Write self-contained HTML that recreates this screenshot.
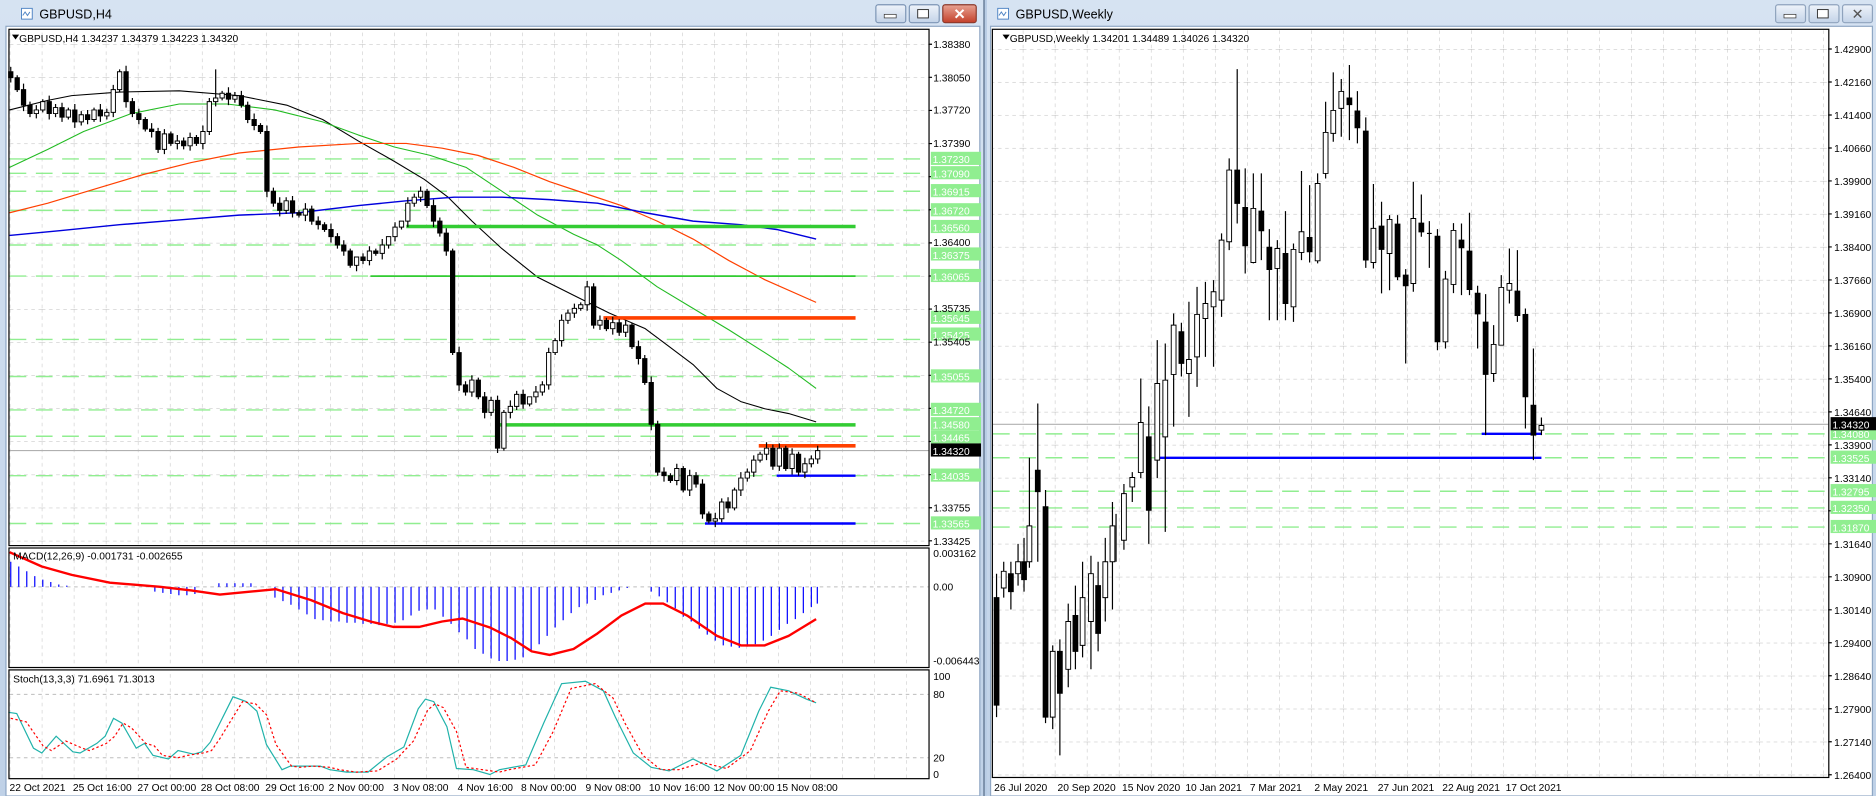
<!DOCTYPE html>
<html><head><meta charset="utf-8"><style>
html,body{margin:0;padding:0;background:#b9cde5;overflow:hidden}
svg{display:block}
text{font-family:"Liberation Sans",sans-serif;}
</style></head><body>
<svg width="1876" height="796" viewBox="0 0 1570 666" preserveAspectRatio="none" xmlns="http://www.w3.org/2000/svg">
<defs>
<linearGradient id="tb" x1="0" y1="0" x2="0" y2="1"><stop offset="0" stop-color="#d6e3f2"/><stop offset="1" stop-color="#bfd1e7"/></linearGradient>
<linearGradient id="btn" x1="0" y1="0" x2="0" y2="1"><stop offset="0" stop-color="#eef3fa"/><stop offset="1" stop-color="#c3d3e8"/></linearGradient>
<linearGradient id="cls" x1="0" y1="0" x2="0" y2="1"><stop offset="0" stop-color="#e8a393"/><stop offset="1" stop-color="#c4402a"/></linearGradient>
<pattern id="gL" patternUnits="userSpaceOnUse" x="8.2" y="37" width="26.8" height="27.7"><line x1="0" y1="0" x2="0" y2="27.7" stroke="#bdbdbd" stroke-width="0.8" stroke-dasharray="3,3"/><line x1="0" y1="0" x2="26.8" y2="0" stroke="#bdbdbd" stroke-width="0.8" stroke-dasharray="3,3"/></pattern>
<pattern id="vL" patternUnits="userSpaceOnUse" x="8.2" y="0" width="26.8" height="6"><line x1="0" y1="0" x2="0" y2="3" stroke="#bdbdbd" stroke-width="0.8"/></pattern>
<pattern id="gR" patternUnits="userSpaceOnUse" x="25.2" y="41" width="26.8" height="27.6"><line x1="0" y1="0" x2="0" y2="27.6" stroke="#bdbdbd" stroke-width="0.8" stroke-dasharray="3,3"/><line x1="0" y1="0" x2="26.8" y2="0" stroke="#bdbdbd" stroke-width="0.8" stroke-dasharray="3,3"/></pattern>
</defs>
<rect x="0" y="0" width="1570" height="666" fill="#b9cde5"/>
<!-- left window -->
<rect x="0" y="0" width="823" height="666" fill="url(#tb)"/>
<rect x="5" y="22" width="815" height="644" fill="#fff" stroke="#8fa7c4"/>
<rect x="18" y="7" width="9" height="9" fill="#fff" stroke="#4f84c4" stroke-width="0.8"/>
<path d="M19 13 l2 -3 2 3 2 -3" stroke="#4f84c4" fill="none" stroke-width="0.8"/>
<text x="33" y="15.5" font-size="10.5" fill="#000">GBPUSD,H4</text>
<rect x="733" y="4" width="25" height="15" rx="2" fill="url(#btn)" stroke="#7d95b5"/>
<rect x="740" y="12" width="10" height="3" fill="#fff" stroke="#333" stroke-width="0.6"/>
<rect x="761" y="4" width="25" height="15" rx="2" fill="url(#btn)" stroke="#7d95b5"/>
<rect x="768" y="8" width="9" height="7" fill="#fff" stroke="#333" stroke-width="0.8"/>
<rect x="789" y="4" width="28" height="15" rx="2" fill="url(#cls)" stroke="#8a3a2c"/>
<text x="803" y="16" font-size="12" font-weight="bold" fill="#fff" text-anchor="middle">✕</text>
<line x1="823.5" y1="0" x2="823.5" y2="666" stroke="#556a86"/>
<!-- right window -->
<rect x="826" y="0" width="744" height="666" fill="url(#tb)"/>
<rect x="829" y="22" width="738" height="644" fill="#fff" stroke="#8fa7c4"/>
<rect x="835" y="7" width="9" height="9" fill="#fff" stroke="#4f84c4" stroke-width="0.8"/>
<path d="M836 13 l2 -3 2 3 2 -3" stroke="#4f84c4" fill="none" stroke-width="0.8"/>
<text x="850" y="15.5" font-size="10.5" fill="#000">GBPUSD,Weekly</text>
<rect x="1486" y="4" width="25" height="15" rx="2" fill="url(#btn)" stroke="#8fa3bd"/>
<rect x="1493" y="12" width="10" height="3" fill="#fff" stroke="#333" stroke-width="0.6"/>
<rect x="1514" y="4" width="25" height="15" rx="2" fill="url(#btn)" stroke="#8fa3bd"/>
<rect x="1521" y="8" width="9" height="7" fill="#fff" stroke="#333" stroke-width="0.8"/>
<rect x="1542" y="4" width="25" height="15" rx="2" fill="url(#btn)" stroke="#8fa3bd"/>
<text x="1554.5" y="16" font-size="12" fill="#555" text-anchor="middle">✕</text>

<!-- LEFT grids -->
<rect x="8" y="25" width="769" height="431" fill="url(#gL)"/>
<rect x="8" y="459" width="769" height="99" fill="url(#vL)"/>
<rect x="8" y="561" width="769" height="90" fill="url(#vL)"/>
<g stroke="#bdbdbd" stroke-width="0.8" stroke-dasharray="3,3">
<line x1="8" y1="491" x2="777" y2="491"/><line x1="8" y1="581" x2="777" y2="581"/><line x1="8" y1="634" x2="777" y2="634"/>
</g>
<g stroke="#90ee90" stroke-width="1.2" stroke-dasharray="14,8">
<line x1="8" y1="133" x2="777" y2="133"/><line x1="8" y1="145" x2="777" y2="145"/><line x1="8" y1="160" x2="777" y2="160"/><line x1="8" y1="176" x2="777" y2="176"/><line x1="8" y1="205" x2="777" y2="205"/><line x1="8" y1="231" x2="777" y2="231"/><line x1="8" y1="284" x2="777" y2="284"/><line x1="8" y1="315" x2="777" y2="315"/><line x1="8" y1="343" x2="777" y2="343"/><line x1="8" y1="365" x2="777" y2="365"/><line x1="8" y1="398" x2="777" y2="398"/><line x1="8" y1="438" x2="777" y2="438"/>
</g>
<line x1="8" y1="377" x2="777" y2="377" stroke="#b0b0b0"/>
<!-- MAs -->
<g fill="none" stroke-linejoin="round">
<polyline stroke="#000" stroke-width="0.9" points="8,92 40,84 60,80 100,77 150,76 200,80 240,88 270,100 300,118 330,135 355,150 375,165 395,185 420,208 450,232 480,247 510,262 540,275 560,290 580,305 600,325 620,336 640,342 660,346 683,353"/>
<polyline stroke="#22bb22" stroke-width="0.9" points="8,140 40,125 70,110 110,95 150,87 190,87 230,92 270,102 300,113 330,123 360,130 390,140 420,160 450,180 480,196 500,205 520,218 550,240 580,258 610,276 640,295 660,308 683,325"/>
<polyline stroke="#ff4000" stroke-width="1" points="8,178 40,170 80,158 120,146 160,136 200,128 250,123 300,120 340,120 370,124 400,130 430,140 460,152 490,162 520,172 550,185 580,200 610,218 640,234 683,253"/>
<polyline stroke="#0000dd" stroke-width="1.2" points="8,197 50,193 100,188 150,184 200,180 250,178 300,172 340,168 380,165 420,165 460,167 500,170 540,178 580,185 620,188 650,192 683,200"/>
</g>
<line x1="340" y1="189.5" x2="716" y2="189.5" stroke="#33cc33" stroke-width="3"/>
<line x1="310" y1="231" x2="716" y2="231" stroke="#33cc33" stroke-width="1.5"/>
<line x1="505" y1="266" x2="716" y2="266" stroke="#ff4000" stroke-width="3"/>
<line x1="415" y1="355.5" x2="716" y2="355.5" stroke="#33cc33" stroke-width="3"/>
<line x1="635" y1="373" x2="716" y2="373" stroke="#ff4000" stroke-width="3"/>
<line x1="650" y1="398" x2="716" y2="398" stroke="#0000ff" stroke-width="2"/>
<line x1="590" y1="438" x2="716" y2="438" stroke="#0000ff" stroke-width="2"/>
<!-- left candles: wicks -->
<path stroke="#000" stroke-width="1" fill="none" d="M9 56V69M14.4 63V77M19.7 70V93M25.1 85V98M30.4 88V99M35.8 83V94M41.2 80V100M46.5 87V98M51.9 86V102M57.2 90V100M62.6 87V107M68 93V105M73.3 92V104M78.7 90V102M84 87V102M89.4 91V100M94.8 71V98M100.1 58V77M105.5 55V90M110.8 82V98M116.2 91V104M121.6 98V110M126.9 103V115M132.3 107V128M137.6 108V129M143 110V122M148.4 113V125M153.7 115V125M159.1 111V126M164.4 113V122M169.8 105V125M175.2 82V113M180.5 58V89M185.9 76V84M191.2 73V88M196.6 77V86M202 76V90M207.3 85V103M212.7 95V109M218 103V112M223.4 105V165M228.8 157V173M234.1 165V181M239.5 165V179M244.8 164V182M250.2 176V182M255.6 170V185M260.9 172V188M266.3 181V192M271.6 186V194M277 187V203M282.4 195V208M287.7 201V214M293.1 208V224M298.4 217V227M303.8 212V221M309.2 206V222M314.5 208V214M319.9 200V217M325.2 202V208M330.6 186V202M336 188V192M341.3 165V190M346.7 162V173M352 156V169M357.4 158V174M362.8 167V190M368.1 182V198M373.5 191V214M378.8 208V297M384.2 290V327M389.6 319V331M394.9 314V332M400.3 316V334M405.6 328V350M411 332V348M416.4 331V379M421.7 343V377M427.1 335V350M432.4 327V343M437.8 326V342M443.2 336V340M448.5 323V337M453.9 319V331M459.2 291V326M464.6 283V297M470 263V290M475.3 259V271M480.7 254V266M486 253V260M491.4 235V260M496.8 237V275M502.1 264V276M507.5 266V277M512.8 265V280M518.2 267V281M523.6 268V282M528.9 270V292M534.3 285V305M539.6 297V322M545 315V360M550.4 352V398M555.7 391V403M561.1 396V404M566.4 388V406M571.8 390V412M577.2 393V415M582.5 395V408M587.9 401V434M593.2 428V438M598.6 429V441M604 417V437M609.3 416V429M614.7 408V427M620 395V415M625.4 392V403M630.8 381V399M636.1 378V387M641.5 370V385M646.8 372V393M652.2 371V394M657.6 373V394M662.9 375V397M668.3 378V398M673.6 383V400M679 381V391M684.3 373V388"/>
<path fill="#000" stroke="#000" stroke-width="0.8" d="M7.2 60h3.6v5h-3.6zM12.6 65h3.6v10h-3.6zM17.9 75h3.6v13h-3.6zM23.3 88h3.6v7h-3.6zM39.4 85h3.6v10h-3.6zM50.1 90h3.6v8h-3.6zM60.8 92h3.6v10h-3.6zM71.5 96h3.6v4h-3.6zM82.2 92h3.6v5h-3.6zM103.7 60h3.6v25h-3.6zM109 85h3.6v10h-3.6zM114.4 95h3.6v5h-3.6zM119.8 100h3.6v8h-3.6zM125.1 108h3.6v2h-3.6zM130.5 110h3.6v15h-3.6zM141.2 112h3.6v8h-3.6zM151.9 118h3.6v4h-3.6zM162.6 115h3.6v5h-3.6zM189.4 78h3.6v5h-3.6zM200.2 80h3.6v8h-3.6zM205.5 88h3.6v12h-3.6zM210.9 100h3.6v5h-3.6zM216.2 105h3.6v5h-3.6zM221.6 110h3.6v50h-3.6zM227 160h3.6v10h-3.6zM232.3 170h3.6v6h-3.6zM243 168h3.6v10h-3.6zM248.4 178h3.6v2h-3.6zM259.1 175h3.6v10h-3.6zM264.5 185h3.6v3h-3.6zM269.8 188h3.6v4h-3.6zM275.2 192h3.6v6h-3.6zM280.6 198h3.6v7h-3.6zM285.9 205h3.6v5h-3.6zM291.3 210h3.6v12h-3.6zM302 215h3.6v3h-3.6zM312.7 210h3.6v2h-3.6zM355.6 160h3.6v12h-3.6zM361 172h3.6v13h-3.6zM366.3 185h3.6v10h-3.6zM371.7 195h3.6v15h-3.6zM377 210h3.6v85h-3.6zM382.4 295h3.6v27h-3.6zM387.8 322h3.6v6h-3.6zM398.5 318h3.6v14h-3.6zM403.8 332h3.6v13h-3.6zM414.6 335h3.6v40h-3.6zM436 330h3.6v8h-3.6zM495 240h3.6v32h-3.6zM505.7 268h3.6v7h-3.6zM516.4 270h3.6v8h-3.6zM527.1 272h3.6v18h-3.6zM532.5 290h3.6v10h-3.6zM537.8 300h3.6v20h-3.6zM543.2 320h3.6v35h-3.6zM548.6 355h3.6v40h-3.6zM553.9 395h3.6v3h-3.6zM559.3 398h3.6v4h-3.6zM570 392h3.6v18h-3.6zM580.7 398h3.6v7h-3.6zM586.1 405h3.6v25h-3.6zM591.4 430h3.6v6h-3.6zM607.5 420h3.6v5h-3.6zM645 375h3.6v15h-3.6zM655.8 375h3.6v17h-3.6zM666.5 380h3.6v15h-3.6z"/>
<path fill="#fff" stroke="#000" stroke-width="0.8" d="M28.6 92h3.6v3h-3.6zM34 85h3.6v7h-3.6zM44.7 90h3.6v5h-3.6zM55.4 92h3.6v6h-3.6zM66.2 96h3.6v6h-3.6zM76.9 92h3.6v8h-3.6zM87.6 94h3.6v3h-3.6zM93 75h3.6v19h-3.6zM98.3 60h3.6v15h-3.6zM135.8 112h3.6v13h-3.6zM146.6 118h3.6v2h-3.6zM157.3 115h3.6v7h-3.6zM168 110h3.6v10h-3.6zM173.4 85h3.6v25h-3.6zM178.7 82h3.6v3h-3.6zM184.1 78h3.6v4h-3.6zM194.8 80h3.6v3h-3.6zM237.7 168h3.6v8h-3.6zM253.8 175h3.6v5h-3.6zM296.6 215h3.6v7h-3.6zM307.4 210h3.6v8h-3.6zM318.1 205h3.6v7h-3.6zM323.4 198h3.6v7h-3.6zM328.8 190h3.6v8h-3.6zM334.2 185h3.6v5h-3.6zM339.5 170h3.6v15h-3.6zM344.9 165h3.6v5h-3.6zM350.2 160h3.6v5h-3.6zM393.1 318h3.6v10h-3.6zM409.2 335h3.6v10h-3.6zM419.9 345h3.6v30h-3.6zM425.3 340h3.6v5h-3.6zM430.6 330h3.6v10h-3.6zM441.4 332h3.6v6h-3.6zM446.7 328h3.6v4h-3.6zM452.1 322h3.6v6h-3.6zM457.4 295h3.6v27h-3.6zM462.8 285h3.6v10h-3.6zM468.2 268h3.6v17h-3.6zM473.5 262h3.6v6h-3.6zM478.9 258h3.6v4h-3.6zM484.2 255h3.6v3h-3.6zM489.6 240h3.6v15h-3.6zM500.3 268h3.6v4h-3.6zM511 270h3.6v5h-3.6zM521.8 272h3.6v6h-3.6zM564.6 392h3.6v10h-3.6zM575.4 398h3.6v12h-3.6zM596.8 434h3.6v2h-3.6zM602.2 420h3.6v14h-3.6zM612.9 410h3.6v15h-3.6zM618.2 400h3.6v10h-3.6zM623.6 395h3.6v5h-3.6zM629 385h3.6v10h-3.6zM634.3 380h3.6v5h-3.6zM639.7 375h3.6v5h-3.6zM650.4 375h3.6v15h-3.6zM661.1 380h3.6v12h-3.6zM671.8 388h3.6v7h-3.6zM677.2 384h3.6v4h-3.6zM682.5 377h3.6v7h-3.6z"/>
<!-- MACD histogram -->
<path stroke="#0000ff" stroke-width="1" fill="none" d="M9 491V470M15.7 491V474M22.4 491V478M29.1 491V482M35.8 491V485M42.5 491V487M49.2 491V489M55.9 491V490M129.6 491V495M136.3 491V496M143 491V497M149.7 491V498M156.4 491V498M163.1 491V497M183.2 491V488M189.9 491V488M196.6 491V488M203.3 491V488M210 491V488M230.1 491V500M236.8 491V503M243.5 491V506M250.2 491V510M256.9 491V514M263.6 491V518M270.3 491V519M277 491V520M283.7 491V520M290.4 491V521M297.1 491V521M303.8 491V522M310.5 491V522M317.2 491V523M323.9 491V522M330.6 491V521M337.3 491V519M344 491V515M350.7 491V511M357.4 491V510M364.1 491V510M370.8 491V516M377.5 491V522M384.2 491V529M390.9 491V535M397.6 491V543M404.3 491V547M411 491V551M417.7 491V553M424.4 491V553M431.1 491V552M437.8 491V550M444.5 491V545M451.2 491V539M457.9 491V532M464.6 491V525M471.3 491V519M478 491V513M484.7 491V508M491.4 491V505M498.1 491V502M504.8 491V498M511.5 491V496M518.2 491V494M524.9 491V492M545 491V495M551.7 491V499M558.4 491V504M565.1 491V509M571.8 491V516M578.5 491V520M585.2 491V526M591.9 491V531M598.6 491V536M605.3 491V540M612 491V541M618.7 491V542M625.4 491V541M632.1 491V539M638.8 491V536M645.5 491V532M652.2 491V527M658.9 491V522M665.6 491V518M672.3 491V513M679 491V508M684 491V505"/>
<polyline fill="none" stroke="#ff0000" stroke-width="2" stroke-linejoin="round" points="8,462 35,474 60,481 92,487.5 134,491 160,494 184,497.5 210,495 231,493 260,502 287,513 310,520 329,524.5 351,524.5 370,520 387,517.5 410,525 428,534 445,545 460,548 480,543 500,530 520,515 540,505 555,505 575,515 600,532 620,540 640,540 660,532 683,518"/>
<!-- Stoch -->
<polyline fill="none" stroke="#20b2aa" stroke-width="1" points="7,596 14,597 28,626 35,630 47,616 61,629 67,630 81,622 88,616 95,601 102,605 114,626 121,622 128,632 141,635 149,628 162,631 169,629 176,621 195,583 206,587 215,595 223,623 236,644 243,641 254,641 268,641 276,644 290,646 308,646 324,633 338,625 350,593 356,585 363,587 374,608 382,643 396,644 410,648 418,644 440,640 455,605 470,572 490,570 505,578 515,600 530,630 545,642 560,645 580,635 600,645 620,632 635,595 645,575 660,578 675,585 683,588"/>
<polyline fill="none" stroke="#ff0000" stroke-width="1" stroke-dasharray="2,2" points="9,601 22,604 36,624 43,628 55,620 69,626 75,628 89,622 96,616 103,605 110,609 122,622 129,624 136,632 149,634 157,632 170,630 177,628 184,618 203,587 214,589 223,598 231,623 244,641 251,642 262,641 276,642 284,644 298,646 316,645 332,635 346,620 358,594 364,589 371,592 382,612 390,642 404,644 418,646 426,644 448,640 463,612 478,576 498,572 513,584 523,605 538,632 553,644 568,644 588,638 608,643 628,628 643,595 653,578 668,580 683,588"/>
<!-- left frames -->
<rect x="7.5" y="24.5" width="770" height="432" fill="none" stroke="#000"/>
<rect x="7.5" y="458.5" width="770" height="100" fill="none" stroke="#000"/>
<rect x="7.5" y="560.5" width="770" height="91" fill="none" stroke="#000"/>
<path stroke="#000" d="M777 37h3M777 64.7h3M777 92.4h3M777 120.1h3M777 147.8h3M777 175.5h3M777 203.2h3M777 230.9h3M777 258.6h3M777 286.3h3M777 314h3M777 341.7h3M777 369.4h3M777 397.1h3M777 424.8h3M777 452.5h3"/>
<!-- left level labels -->
<g fill="#90ee90">
<rect x="779" y="127" width="42" height="11"/><rect x="779" y="139" width="42" height="11"/><rect x="779" y="154" width="42" height="11"/><rect x="779" y="170" width="42" height="11"/><rect x="779" y="184" width="42" height="11"/><rect x="779" y="207" width="42" height="11"/><rect x="779" y="225" width="42" height="11"/><rect x="779" y="260" width="42" height="11"/><rect x="779" y="274" width="42" height="11"/><rect x="779" y="309" width="42" height="11"/><rect x="779" y="337" width="42" height="11"/><rect x="779" y="349" width="42" height="11"/><rect x="779" y="360" width="42" height="11"/><rect x="779" y="392" width="42" height="11"/><rect x="779" y="432" width="42" height="11"/>
</g>
<rect x="779" y="371" width="42" height="11" fill="#000"/>
<g font-size="8.6" fill="#fff">
<text x="780.5" y="136.5">1.37230</text><text x="780.5" y="148.5">1.37090</text><text x="780.5" y="163.5">1.36915</text><text x="780.5" y="179.5">1.36720</text><text x="780.5" y="193.5">1.36560</text><text x="780.5" y="216.5">1.36375</text><text x="780.5" y="234.5">1.36065</text><text x="780.5" y="269.5">1.35645</text><text x="780.5" y="283.5">1.35425</text><text x="780.5" y="318.5">1.35055</text><text x="780.5" y="346.5">1.34720</text><text x="780.5" y="358.5">1.34580</text><text x="780.5" y="369.5">1.34465</text><text x="780.5" y="380.5">1.34320</text><text x="780.5" y="401.5">1.34035</text><text x="780.5" y="441.5">1.33565</text>
</g>

<!-- RIGHT -->
<rect x="831" y="25" width="699" height="625" fill="url(#gR)"/>
<g stroke="#90ee90" stroke-width="1.2" stroke-dasharray="14,8">
<line x1="831" y1="363" x2="1530" y2="363"/><line x1="831" y1="383" x2="1530" y2="383"/><line x1="831" y1="411" x2="1530" y2="411"/><line x1="831" y1="425" x2="1530" y2="425"/><line x1="831" y1="441" x2="1530" y2="441"/>
</g>
<line x1="831" y1="355" x2="1530" y2="355" stroke="#b0b0b0"/>
<line x1="1240" y1="363" x2="1290" y2="363" stroke="#0000ff" stroke-width="2"/>
<line x1="967" y1="383" x2="1290" y2="383" stroke="#0000ff" stroke-width="2"/>
<path stroke="#000" stroke-width="1" fill="none" d="M834 480V600M840 470V500M846 470V510M852 455V490M857 450V495M861.5 383V475M868.5 337.6V470M875 410V605M881 540V610M887 535V632M894 505V575M900 490V560M906 470V550M913 465V560M919 470V545M925 450V520M931 420V510M934 430V470M940.6 405V460M947.6 395V420M954.7 316.7V400M961.4 340V455M968.5 284.6V400M975.2 287.4V445M982.2 262.3V357M988.7 270V315M995 252.5V348.8M1001.8 240V323.7M1008.8 235.8V298.6M1015.6 234.4V306.9M1022.3 195.3V265.1M1028.7 132.5V209.3M1035.4 57.8V187M1042.1 140.9V228.8M1048.9 145.1V220.4M1055.6 145.1V217.6M1062.3 191.7V267.9M1069 200.9V267.9M1075.8 176.6V267.9M1082.5 203.7V269.3M1089.2 143.1V217.6M1096 154.9V219.6M1102.7 145.1V220.4M1109.4 85.1V149.3M1115.8 60.6V118.6M1122.5 66.1V114.4M1129.3 54.4V117.2M1136 76.2V120M1143 98.2V224.1M1149.4 154V224.6M1156.2 168.8V245.5M1162.9 180V242.8M1169.6 180V234.4M1176.4 225.2V304.1M1182.8 152.1V244.1M1189.5 162.7V198.1M1196.2 185V224.1M1194.2 195.3H1198.2M1203 191.7V293M1209.7 226.6V291.6M1216.4 186.7V245.3M1223.1 187V246.9M1229.8 178V246.9M1236.6 239.1V291.6M1243.3 246.1V364.1M1250 272V319.5M1256.4 230.2V288.8M1263.2 207.9V253.9M1269.9 209.3V269.3M1276.6 258.1V358.5M1283.3 291.6V385M1290 349.3V364.1"/>
<path fill="#000" stroke="#000" stroke-width="0.8" d="M832 500h4v90h-4zM844 480h4v15h-4zM855 470h4v15h-4zM866.5 393.4h4v18h-4zM873 424h4v176h-4zM885 545h4v35h-4zM898 515h4v30h-4zM917 490h4v40h-4zM959.4 365.5h4v61.4h-4zM986.7 277.6h4v26.5h-4zM1033.4 142.3h4v27.9h-4zM1040.1 173.6h4v32h-4zM1053.6 176.6h4v16.5h-4zM1060.3 206.8h4v18.7h-4zM1073.8 212.1h4v41.8h-4zM1094 198.7h4v12h-4zM1127.3 82h4v5.6h-4zM1134 92.9h4v14h-4zM1141 109.7h4v107.9h-4zM1154.2 189.2h4v19.5h-4zM1167.6 187.5h4v44.1h-4zM1174.4 230.2h4v8.9h-4zM1187.5 186.7h4v7.3h-4zM1201 197.6h4v88.4h-4zM1221.1 200.9h4v6.4h-4zM1227.8 210.1h4v32.1h-4zM1234.6 245.3h4v17.3h-4zM1241.3 269.5h4v43.8h-4zM1267.9 243.6h4v20.4h-4zM1274.6 263.1h4v68.9h-4zM1281.3 339h4v25.1h-4z"/>
<path fill="#fff" stroke="#000" stroke-width="0.8" d="M838 478h4v14h-4zM850 470h4v10h-4zM859.5 440h4v30h-4zM879 545h4v55h-4zM892 520h4v40h-4zM904 500h4v40h-4zM911 480h4v40h-4zM923 470h4v30h-4zM929 440h4v30h-4zM938.6 413h4v39h-4zM945.6 399.5h4v7.9h-4zM952.7 353.5h4v41.9h-4zM966.5 320.9h4v64.1h-4zM973.2 318.1h4v47.4h-4zM980.2 272h4v41.3h-4zM993 300.8h4v11.7h-4zM999.8 263.1h4v35.5h-4zM1006.8 253.9h4v12.6h-4zM1013.6 244.1h4v12.6h-4zM1020.3 200.9h4v50.2h-4zM1026.7 142.3h4v60h-4zM1046.9 174.4h4v45.2h-4zM1067 207.9h4v16.7h-4zM1080.5 208.7h4v48h-4zM1087.2 193.9h4v17.3h-4zM1100.7 153.5h4v64.7h-4zM1107.4 110.8h4v34.3h-4zM1113.8 92.4h4v19.2h-4zM1120.5 76.5h4v14.2h-4zM1147.4 191.1h4v28.5h-4zM1160.9 183.6h4v28.5h-4zM1180.8 182.8h4v54.4h-4zM1207.7 233.5h4v52.5h-4zM1214.4 192.8h4v45.2h-4zM1248 288.2h4v24.3h-4zM1254.4 240.5h4v48.3h-4zM1261.2 237.2h4v5.6h-4zM1288 356h4v3.9h-4z"/>
<rect x="830.5" y="24.5" width="700" height="626" fill="none" stroke="#000"/>
<path stroke="#000" d="M1530 41h3M1530 68.6h3M1530 96.2h3M1530 123.8h3M1530 151.4h3M1530 179h3M1530 206.6h3M1530 234.2h3M1530 261.8h3M1530 289.4h3M1530 317h3M1530 344.6h3M1530 372.2h3M1530 399.8h3M1530 427.4h3M1530 455h3M1530 482.6h3M1530 510.2h3M1530 537.8h3M1530 565.4h3M1530 593h3M1530 620.6h3M1530 648.2h3"/>
<g font-size="8.6" fill="#000">
<text x="1535" y="44.5">1.42900</text><text x="1535" y="72.1">1.42160</text><text x="1535" y="99.7">1.41400</text><text x="1535" y="127.3">1.40660</text><text x="1535" y="154.9">1.39900</text><text x="1535" y="182.5">1.39160</text><text x="1535" y="210.1">1.38400</text><text x="1535" y="237.7">1.37660</text><text x="1535" y="265.3">1.36900</text><text x="1535" y="292.9">1.36160</text><text x="1535" y="320.5">1.35400</text><text x="1535" y="348.1">1.34640</text><text x="1535" y="375.7">1.33900</text><text x="1535" y="403.3">1.33140</text><text x="1535" y="458.5">1.31640</text><text x="1535" y="486.1">1.30900</text><text x="1535" y="513.7">1.30140</text><text x="1535" y="541.3">1.29400</text><text x="1535" y="568.9">1.28640</text><text x="1535" y="596.5">1.27900</text><text x="1535" y="624.1">1.27140</text><text x="1535" y="651.7">1.26400</text>
</g>
<g fill="#90ee90"><rect x="1532" y="357" width="42" height="11"/><rect x="1532" y="377" width="42" height="11"/><rect x="1532" y="405" width="42" height="11"/><rect x="1532" y="419" width="42" height="11"/><rect x="1532" y="435" width="42" height="11"/></g>
<rect x="1532" y="349" width="42" height="11" fill="#000"/>
<g font-size="8.6" fill="#fff"><text x="1533.5" y="358.5">1.34320</text><text x="1533.5" y="366.5">1.34080</text><text x="1533.5" y="386.5">1.33525</text><text x="1533.5" y="414.5">1.32795</text><text x="1533.5" y="428.5">1.32350</text><text x="1533.5" y="444.5">1.31870</text></g>

<!-- texts -->
<g font-size="8.6" fill="#000">
<text x="16" y="35">GBPUSD,H4  1.34237 1.34379 1.34223 1.34320</text>
<text x="11" y="468">MACD(12,26,9) -0.001731 -0.002655</text>
<text x="11" y="571">Stoch(13,3,3) 71.6961 71.3013</text>
<text x="845" y="35">GBPUSD,Weekly  1.34201 1.34489 1.34026 1.34320</text>
</g>
<path d="M10 29 h6 l-3 4z" fill="#000"/>
<path d="M839 29 h6 l-3 4z" fill="#000"/>
<g font-size="8.6" fill="#000">
<text x="8" y="662">22 Oct 2021</text><text x="61" y="662">25 Oct 16:00</text><text x="115" y="662">27 Oct 00:00</text><text x="168" y="662">28 Oct 08:00</text><text x="222" y="662">29 Oct 16:00</text><text x="275" y="662">2 Nov 00:00</text><text x="329" y="662">3 Nov 08:00</text><text x="383" y="662">4 Nov 16:00</text><text x="436" y="662">8 Nov 00:00</text><text x="490" y="662">9 Nov 08:00</text><text x="543" y="662">10 Nov 16:00</text><text x="597" y="662">12 Nov 00:00</text><text x="650" y="662">15 Nov 08:00</text>
<text x="832" y="662">26 Jul 2020</text><text x="885" y="662">20 Sep 2020</text><text x="939" y="662">15 Nov 2020</text><text x="992" y="662">10 Jan 2021</text><text x="1046" y="662">7 Mar 2021</text><text x="1100" y="662">2 May 2021</text><text x="1153" y="662">27 Jun 2021</text><text x="1207" y="662">22 Aug 2021</text><text x="1260" y="662">17 Oct 2021</text>
<text x="781" y="40">1.38380</text><text x="781" y="68">1.38050</text><text x="781" y="95">1.37720</text><text x="781" y="123">1.37390</text><text x="781" y="206">1.36400</text><text x="781" y="289">1.35405</text><text x="781" y="261">1.35735</text><text x="781" y="428">1.33755</text><text x="781" y="456">1.33425</text>
<text x="781" y="466">0.003162</text><text x="781" y="494">0.00</text><text x="781" y="556">-0.006443</text>
<text x="781" y="569">100</text><text x="781" y="584">80</text><text x="781" y="637">20</text><text x="781" y="651">0</text>
</g>
</svg>
</body></html>
